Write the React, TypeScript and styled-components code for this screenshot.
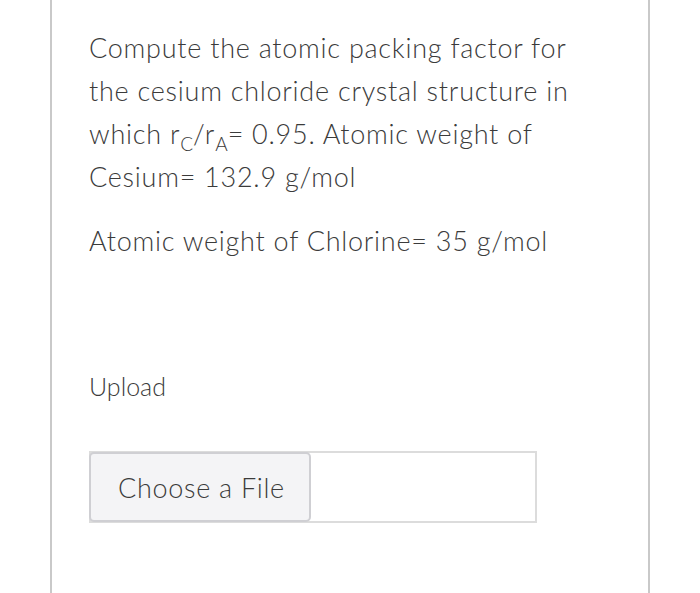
import styled, { createGlobalStyle } from 'styled-components';

const GlobalStyle = createGlobalStyle`
	html, body {
		margin: 0;
		padding: 0;
		background: #ffffff;
	}
	body {
		font-family: Lato, 'Noto Sans', sans-serif;
		color: #3b3b3b;
	}
`;

const Panel = styled.div`
	margin-left: 50px;
	width: 600px;
	height: 593px;
	box-sizing: border-box;
	border-left: 2px solid #c9c9c9;
	border-right: 2px solid #c9c9c9;
	padding: 26px 0 0 37px;
	overflow: hidden;
`;

const Question = styled.div`
	width: 505px;
	font-size: 27px;
	line-height: 43px;
	font-weight: 300;
	letter-spacing: 0.75px;
	& > p {
		margin: 0 0 21px;
	}
`;

const Sub = styled.sub`
	font-size: 19px;
	vertical-align: -7px;
	line-height: 0;
	letter-spacing: 0;
`;

const Label = styled.div`
	margin-top: 109px;
	font-size: 25px;
	line-height: 30px;
	font-weight: 300;
`;

const FileBox = styled.div`
	margin-top: 50px;
	width: 448px;
	height: 72px;
	box-sizing: border-box;
	border: 2px solid #dcdcdc;
	display: flex;
`;

const ChooseButton = styled.button`
	width: 222px;
	height: 70px;
	margin: -1px 0 0 -2px;
	box-sizing: border-box;
	border: 2px solid #cfcfd3;
	border-radius: 5px;
	background: #f4f4f6;
	font-family: Lato, 'Noto Sans', sans-serif;
	font-size: 27px;
	font-weight: 300;
	letter-spacing: 0.7px;
	color: #3b3b3b;
	padding: 0 0 0 3px;
`;

export default function App() {
	return (
		<>
			<GlobalStyle />
			<Panel>
				<Question>
					<p>
						Compute the atomic packing factor for the cesium chloride crystal
						structure in which r<Sub>C</Sub>/r<Sub>A</Sub>= 0.95. Atomic weight
						of Cesium= 132.9 g/mol
					</p>
					<p>Atomic weight of Chlorine= 35 g/mol</p>
				</Question>
				<Label>Upload</Label>
				<FileBox>
					<ChooseButton>Choose a File</ChooseButton>
				</FileBox>
			</Panel>
		</>
	);
}
